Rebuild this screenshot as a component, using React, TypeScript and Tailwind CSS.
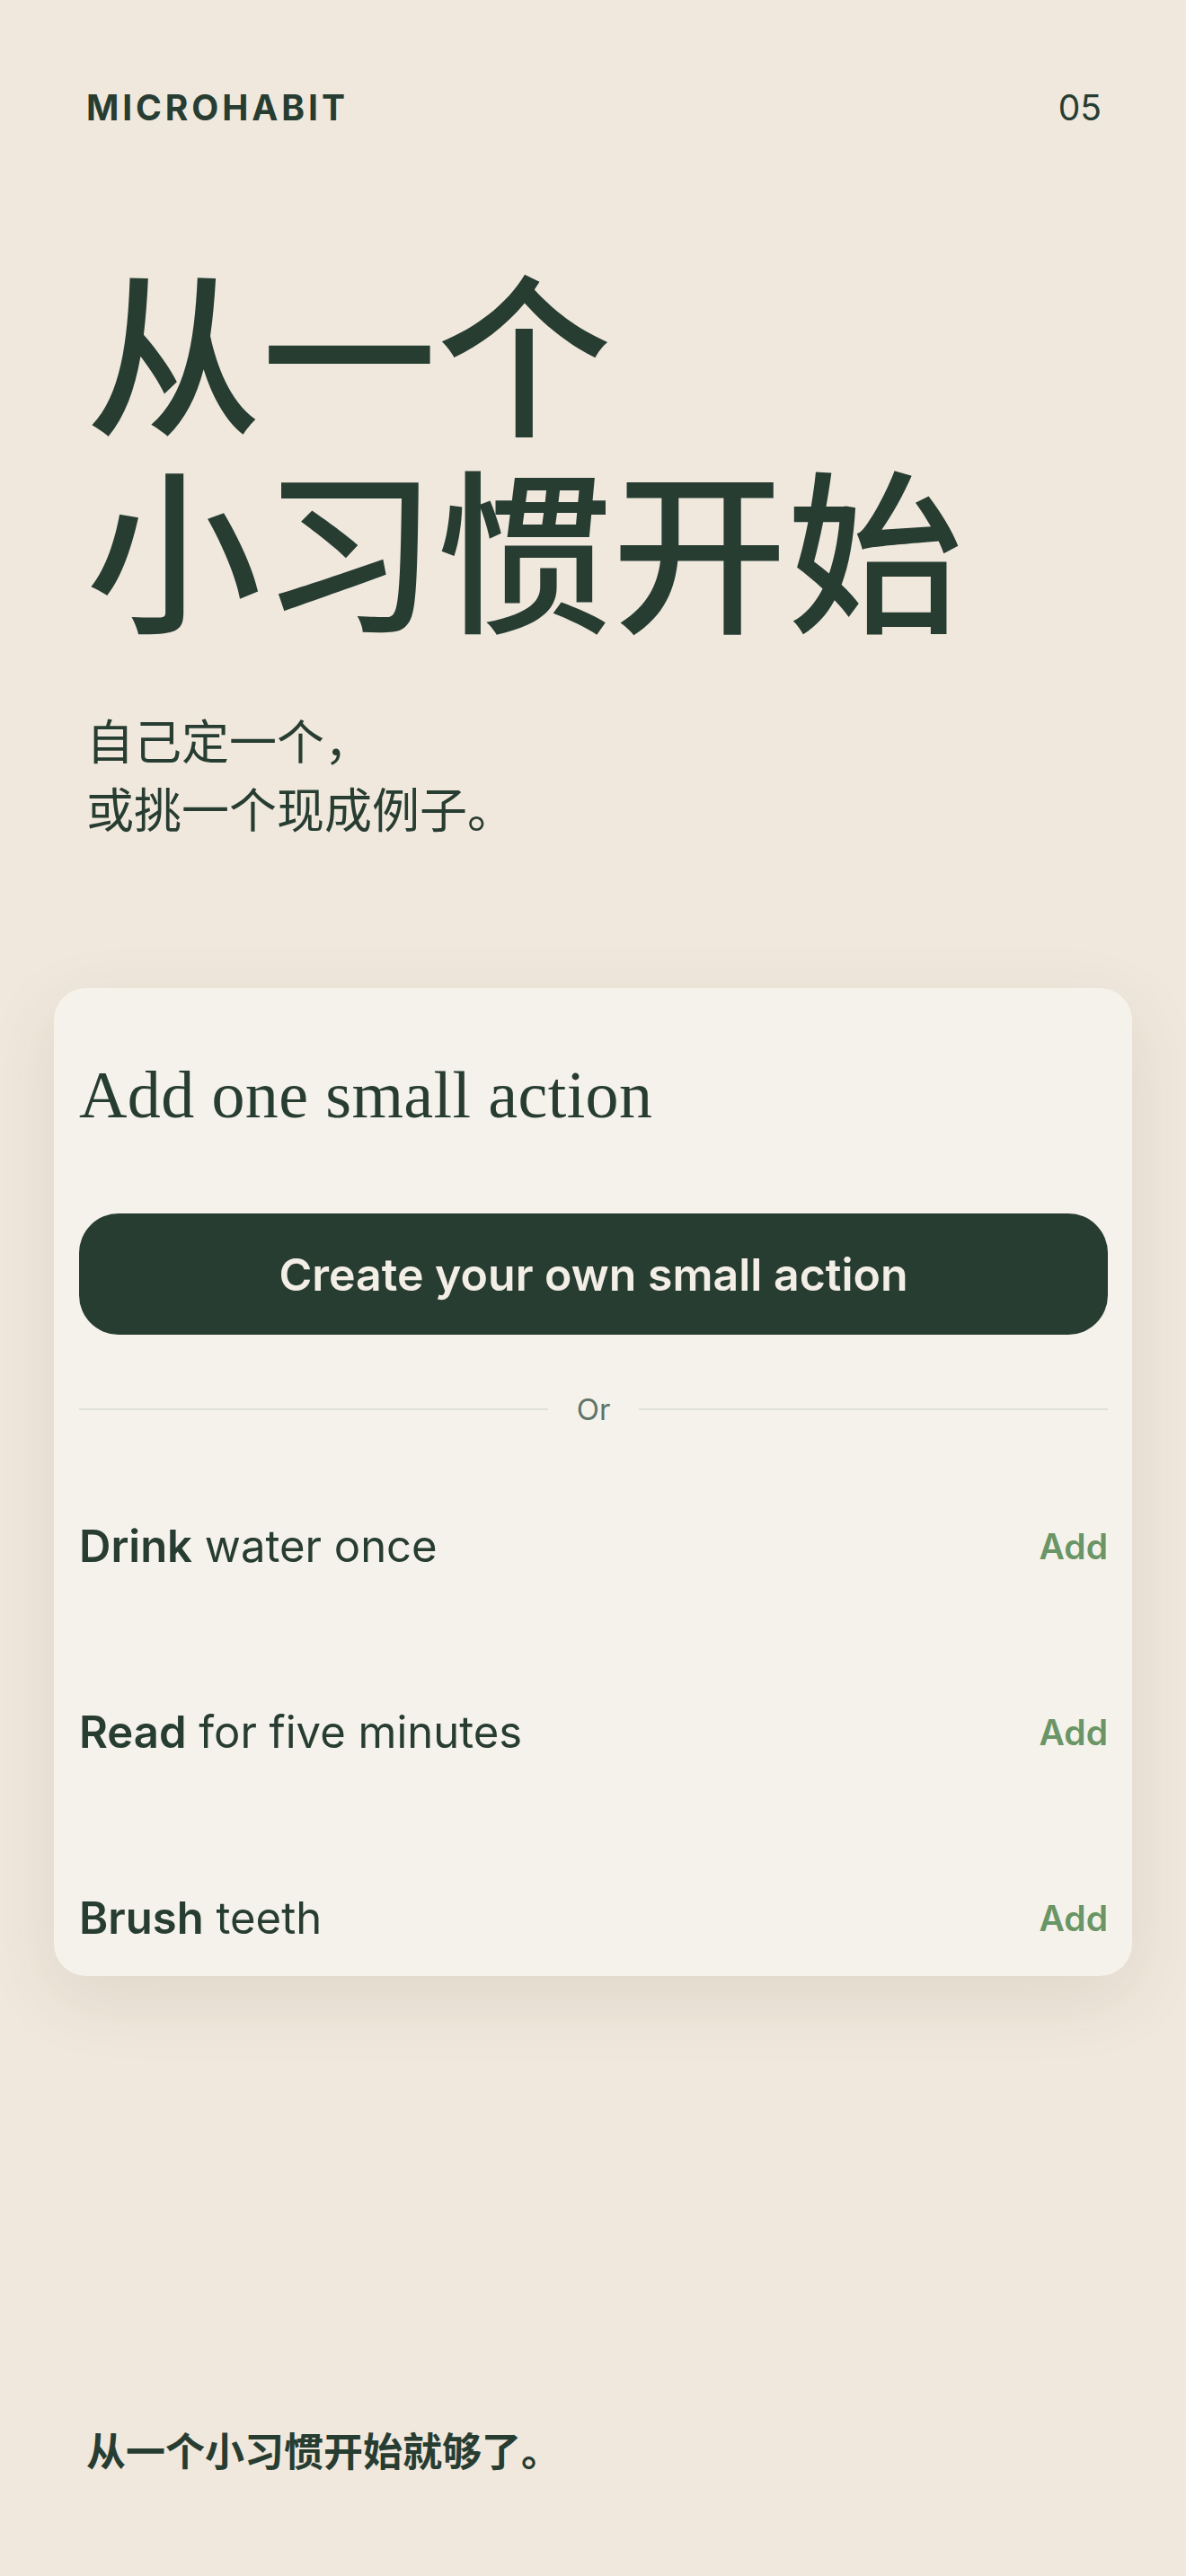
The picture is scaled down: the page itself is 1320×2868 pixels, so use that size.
import React from "react";

const habits = [
  { verb: "Drink", rest: "water once" },
  { verb: "Read", rest: "for five minutes" },
  { verb: "Brush", rest: "teeth" },
];

export default function App() {
  const cjk = { fontFamily: '"Noto Sans CJK SC", "Noto Sans", sans-serif' };
  const inter = { fontFamily: 'Inter, "Noto Sans", sans-serif' };
  return (
    <div className="min-h-screen w-full bg-[#f0e8dd] text-[#283d32] flex flex-col">
      <header className="flex items-center justify-between pl-[96px] pr-[94px] pt-[100px]" style={inter}>
        <span className="text-[39px] leading-none font-bold tracking-[0.1em]">MICROHABIT</span>
        <span className="text-[39px] leading-none font-normal">05</span>
      </header>

      <section className="px-[96px]" style={cjk}>
        <h1 className="mt-[138px] text-[195px] leading-[219px] font-medium tracking-normal">
          从一个
          <br />
          小习惯开始
        </h1>
        <p className="mt-[70px] text-[53px] leading-[76px] font-normal">
          自己定一个，
          <br />
          或挑一个现成例子。
        </p>
      </section>

      <div className="mx-[60px] mt-[163px] h-[1100px] shrink-0 overflow-hidden rounded-[36px] bg-[#f5f2eb] pl-[28px] pr-[27px] shadow-[0_24px_80px_rgba(80,60,30,0.10)] flex flex-col">
        <h2
          className="mt-[82px] shrink-0 text-[74px] leading-[74px] font-normal tracking-[0.005em]"
          style={{ fontFamily: '"Liberation Serif", "DejaVu Serif", serif' }}
        >
          Add one small action
        </h2>
        <button
          className="mt-[95px] h-[135px] shrink-0 w-full rounded-[44px] bg-[#283d32] text-[#f4efe6] text-[50px] font-semibold leading-none flex items-center justify-center"
          style={inter}
        >
          Create your own small action
        </button>
        <div className="mt-[66px] h-[34px] shrink-0 flex items-center gap-[32px]" style={inter}>
          <div className="flex-1 h-[2px] bg-[#dfe1d7]" />
          <span className="text-[33px] leading-none text-[#5f7366]">Or</span>
          <div className="flex-1 h-[2px] bg-[#dfe1d7]" />
        </div>
        <ul className="mt-[32px] shrink-0 flex flex-col" style={inter}>
          {habits.map((h) => (
            <li key={h.verb} className="h-[207px] shrink-0 flex items-center justify-between">
              <span className="text-[49px] leading-none text-[#283d32]">
                <span className="font-semibold">{h.verb}</span> {h.rest}
              </span>
              <span className="text-[39px] leading-none font-semibold text-[#6a9566]">Add</span>
            </li>
          ))}
        </ul>
      </div>

      <footer className="mt-auto px-[96px] pb-[119px]" style={cjk}>
        <p className="text-[44px] leading-none font-bold">从一个小习惯开始就够了。</p>
      </footer>
    </div>
  );
}
